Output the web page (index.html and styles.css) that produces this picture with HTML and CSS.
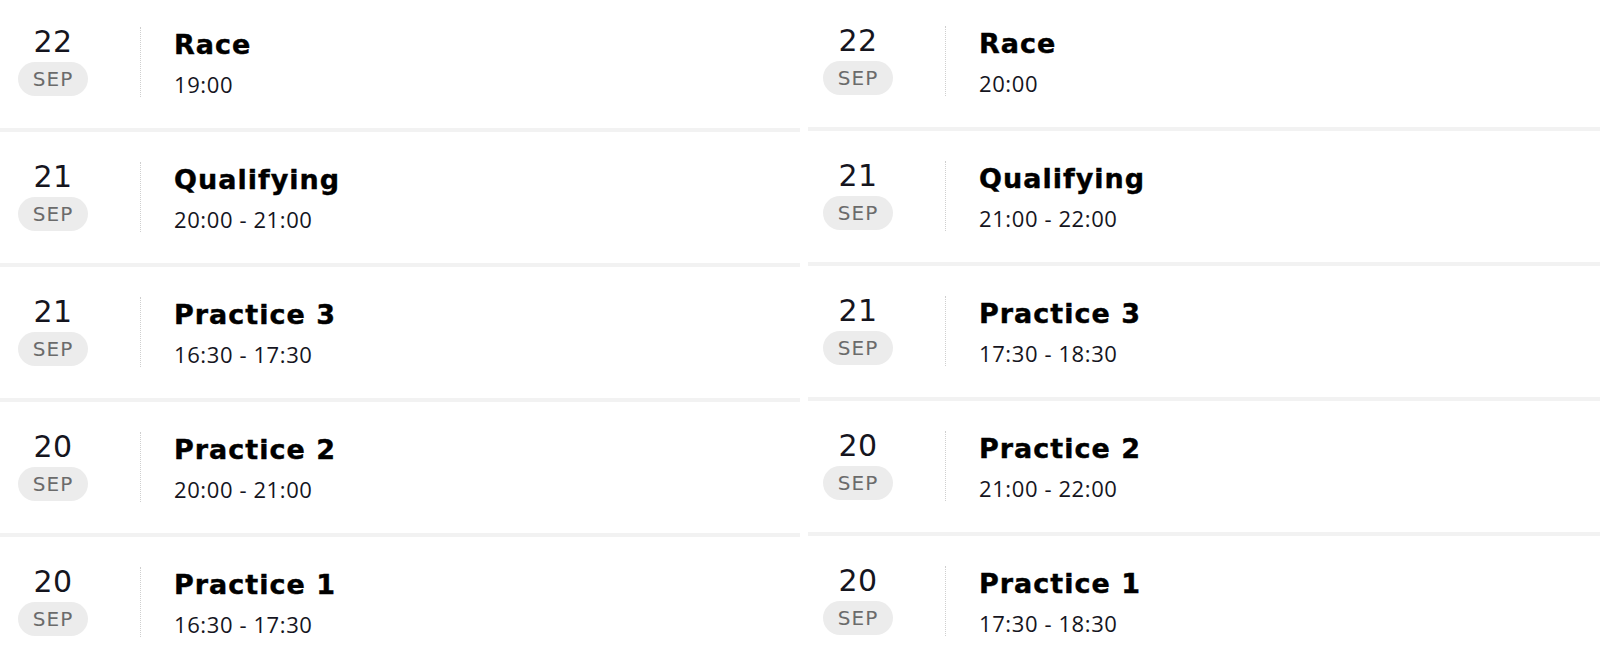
FILE: index.html
```html
<!DOCTYPE html>
<html lang="en">
<head>
<meta charset="utf-8">
<title>Schedule</title>
<link rel="stylesheet" href="styles.css">
</head>
<body>
<div class="schedule">
  <div class="column column-left">
    <div class="row">
      <div class="date"><div class="day">22</div><div class="month">SEP</div></div>
      <div class="divider"></div>
      <div class="info"><div class="title">Race</div><div class="time">19:00</div></div>
    </div>
    <div class="row">
      <div class="date"><div class="day">21</div><div class="month">SEP</div></div>
      <div class="divider"></div>
      <div class="info"><div class="title">Qualifying</div><div class="time">20:00 - 21:00</div></div>
    </div>
    <div class="row">
      <div class="date"><div class="day">21</div><div class="month">SEP</div></div>
      <div class="divider"></div>
      <div class="info"><div class="title">Practice 3</div><div class="time">16:30 - 17:30</div></div>
    </div>
    <div class="row">
      <div class="date"><div class="day">20</div><div class="month">SEP</div></div>
      <div class="divider"></div>
      <div class="info"><div class="title">Practice 2</div><div class="time">20:00 - 21:00</div></div>
    </div>
    <div class="row">
      <div class="date"><div class="day">20</div><div class="month">SEP</div></div>
      <div class="divider"></div>
      <div class="info"><div class="title">Practice 1</div><div class="time">16:30 - 17:30</div></div>
    </div>
  </div>
  <div class="column column-right">
    <div class="row">
      <div class="date"><div class="day">22</div><div class="month">SEP</div></div>
      <div class="divider"></div>
      <div class="info"><div class="title">Race</div><div class="time">20:00</div></div>
    </div>
    <div class="row">
      <div class="date"><div class="day">21</div><div class="month">SEP</div></div>
      <div class="divider"></div>
      <div class="info"><div class="title">Qualifying</div><div class="time">21:00 - 22:00</div></div>
    </div>
    <div class="row">
      <div class="date"><div class="day">21</div><div class="month">SEP</div></div>
      <div class="divider"></div>
      <div class="info"><div class="title">Practice 3</div><div class="time">17:30 - 18:30</div></div>
    </div>
    <div class="row">
      <div class="date"><div class="day">20</div><div class="month">SEP</div></div>
      <div class="divider"></div>
      <div class="info"><div class="title">Practice 2</div><div class="time">21:00 - 22:00</div></div>
    </div>
    <div class="row">
      <div class="date"><div class="day">20</div><div class="month">SEP</div></div>
      <div class="divider"></div>
      <div class="info"><div class="title">Practice 1</div><div class="time">17:30 - 18:30</div></div>
    </div>
  </div>
</div>
</body>
</html>
```
FILE: styles.css
```css
html, body {
  margin: 0;
  padding: 0;
  background: #ffffff;
  overflow: hidden;
}

.schedule {
  display: grid;
  grid-template-columns: 800px 795px;
  column-gap: 5px;
  align-items: start;
}

.column-left {
  margin-top: -3px;
}

.column-right {
  margin-top: -4px;
}

.row {
  display: flex;
  align-items: flex-start;
  height: 135px;
  box-sizing: border-box;
  padding-top: 30px;
  border-bottom: 4px solid #f2f2f2;
}

.column-right .row {
  margin-left: 3px;
}

.column-right .date {
  margin-left: 15px;
}

.date {
  width: 70px;
  margin-left: 18px;
  display: flex;
  flex-direction: column;
  align-items: center;
}

.day {
  font-family: "DejaVu Sans", sans-serif;
  font-size: 30px;
  line-height: 30px;
  color: #15151e;
  letter-spacing: 0.5px;
}

.month {
  margin-top: 5px;
  width: 70px;
  height: 34px;
  border-radius: 17px;
  background: #ececec;
  color: #6b6b6b;
  font-family: "DejaVu Sans", sans-serif;
  font-size: 20px;
  line-height: 34px;
  letter-spacing: 1px;
  text-align: center;
}

.divider {
  width: 0;
  height: 70px;
  margin-left: 52px;
  border-left: 1px dotted #cfcfcf;
}

.info {
  margin-left: 33px;
  padding-top: 2px;
}

.title {
  font-family: "DejaVu Sans", sans-serif;
  font-weight: bold;
  font-size: 27px;
  line-height: 32px;
  letter-spacing: 1px;
  color: #000000;
  -webkit-text-stroke: 0.4px #000000;
}

.time {
  margin-top: 8px;
  font-family: "Open Sans", sans-serif;
  font-size: 22px;
  line-height: 30px;
  letter-spacing: 0.6px;
  color: #15151e;
}
```
